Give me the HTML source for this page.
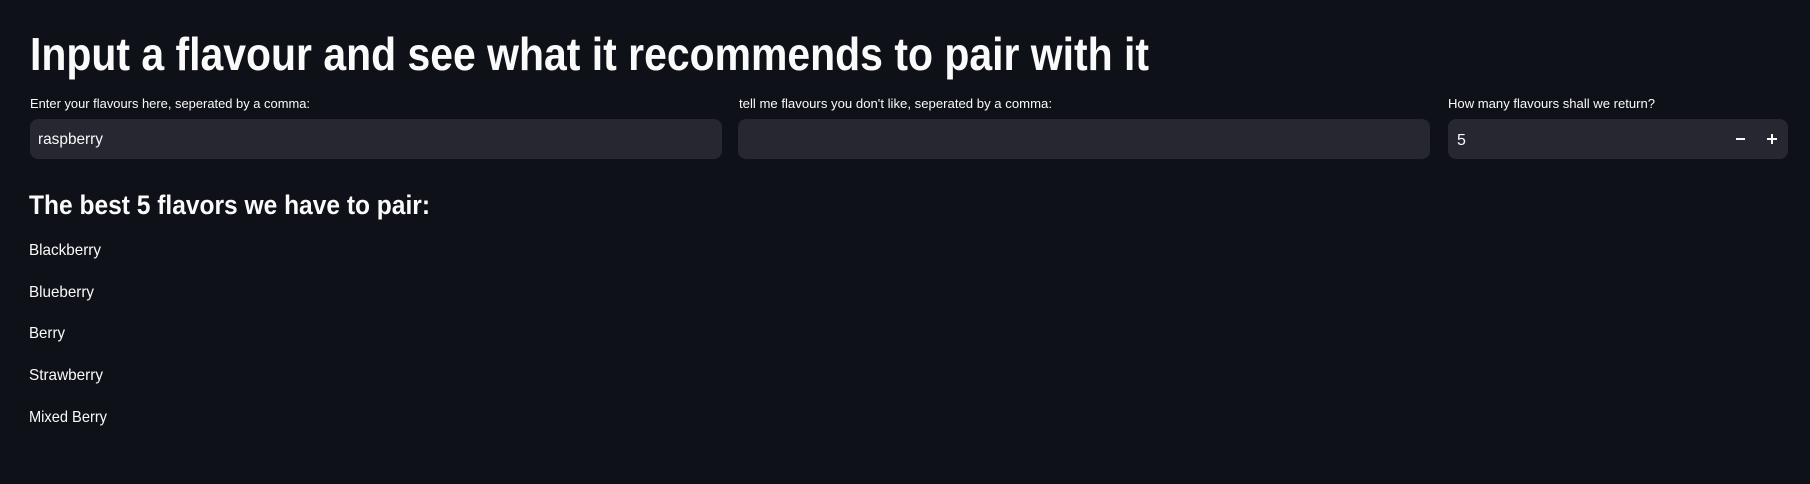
<!DOCTYPE html>
<html><head><meta charset="utf-8"><style>
html,body{margin:0;padding:0;background:#0e1117;width:1810px;height:484px;overflow:hidden}
svg{display:block}
text{font-family:"Liberation Sans",sans-serif;fill:#fafafa}
</style></head><body>
<svg width="1810" height="484" viewBox="0 0 1810 484" xmlns="http://www.w3.org/2000/svg">
<rect width="1810" height="484" fill="#0e1117"/>
<text x="30" y="70" font-size="46" font-weight="bold" textLength="1119" lengthAdjust="spacingAndGlyphs">Input a flavour and see what it recommends to pair with it</text>
<text x="30" y="108" font-size="13" textLength="280" lengthAdjust="spacingAndGlyphs">Enter your flavours here, seperated by a comma:</text>
<text x="739" y="108" font-size="13" textLength="313" lengthAdjust="spacingAndGlyphs">tell me flavours you don't like, seperated by a comma:</text>
<text x="1448" y="108" font-size="13" textLength="207" lengthAdjust="spacingAndGlyphs">How many flavours shall we return?</text>
<rect x="30" y="119" width="692" height="40" rx="8" fill="#262730"/>
<rect x="738" y="119" width="692" height="40" rx="8" fill="#262730"/>
<rect x="1448" y="119" width="340" height="40" rx="8" fill="#262730"/>
<text x="38" y="144" font-size="16" textLength="65" lengthAdjust="spacingAndGlyphs">raspberry</text>
<text x="1457" y="145" font-size="16">5</text>
<rect x="1736" y="138" width="9" height="2" fill="#fafafa"/>
<rect x="1767" y="138" width="10" height="2" fill="#fafafa"/>
<rect x="1771" y="134" width="2" height="10" fill="#fafafa"/>
<text x="29" y="214" font-size="27" font-weight="bold" textLength="401" lengthAdjust="spacingAndGlyphs">The best 5 flavors we have to pair:</text>
<text x="29" y="255" font-size="16" textLength="72" lengthAdjust="spacingAndGlyphs">Blackberry</text>
<text x="29" y="297" font-size="16" textLength="65" lengthAdjust="spacingAndGlyphs">Blueberry</text>
<text x="29" y="338" font-size="16" textLength="36" lengthAdjust="spacingAndGlyphs">Berry</text>
<text x="29" y="380" font-size="16" textLength="74" lengthAdjust="spacingAndGlyphs">Strawberry</text>
<text x="29" y="422" font-size="16" textLength="78" lengthAdjust="spacingAndGlyphs">Mixed Berry</text>
</svg>
</body></html>
